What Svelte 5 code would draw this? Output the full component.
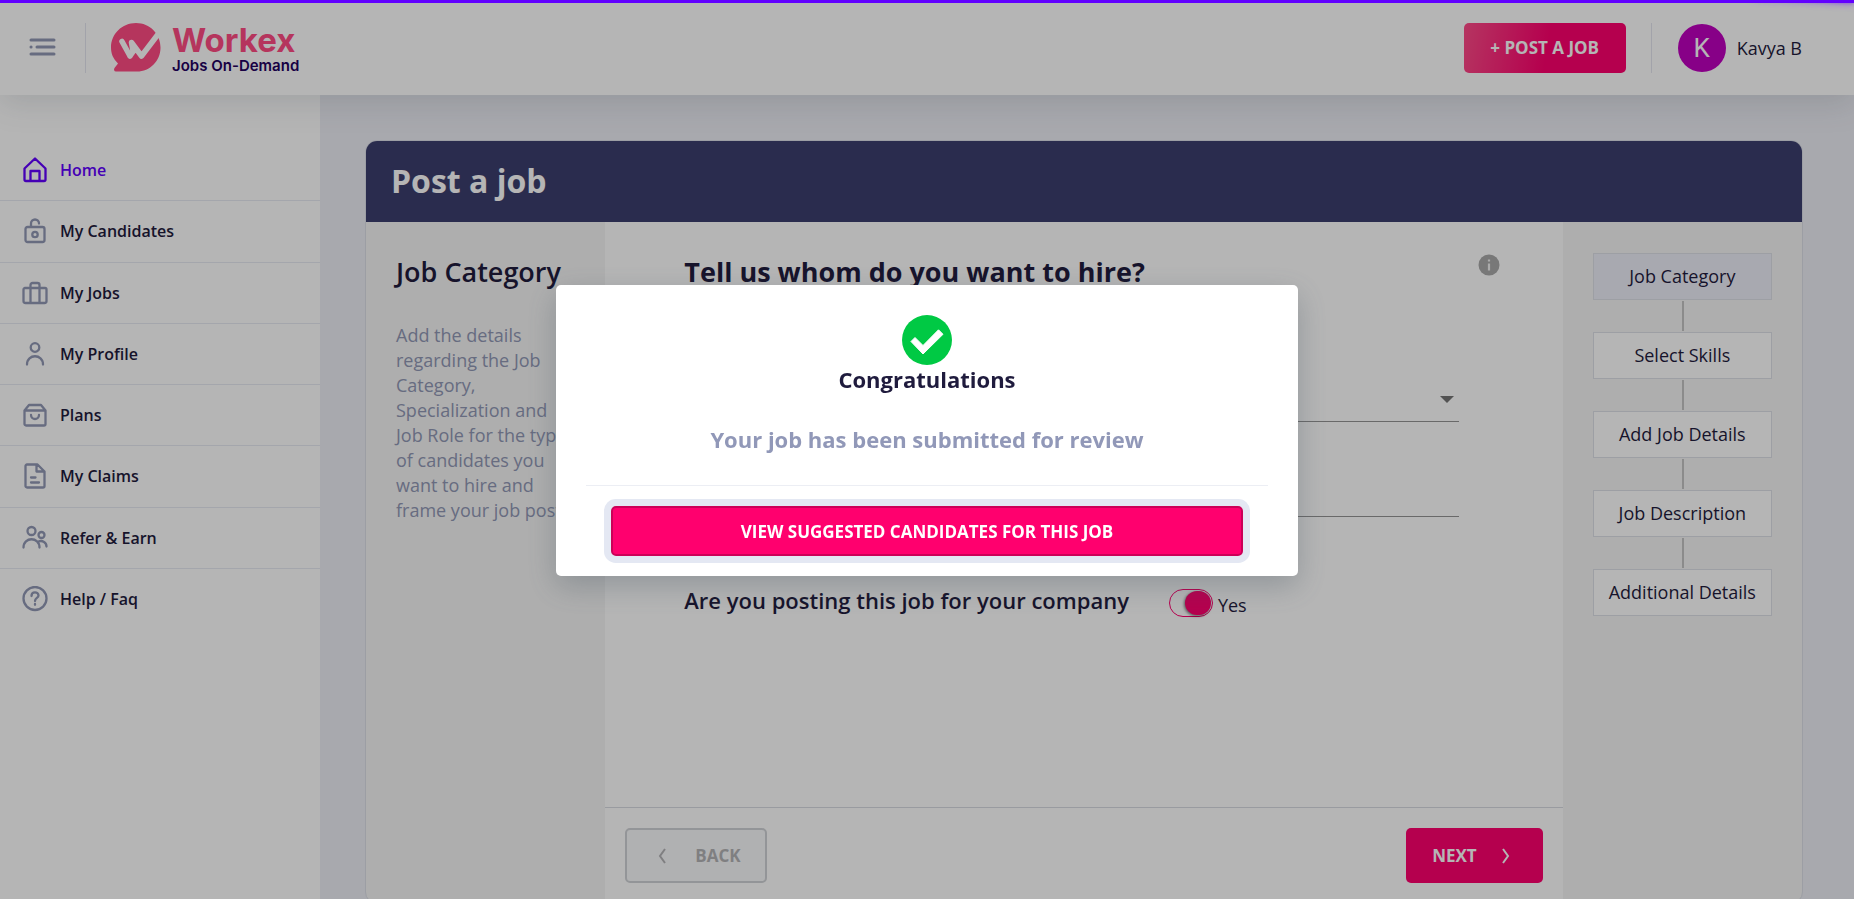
<script>
  let companyJob = $state(true);
  const menu = [
    { label: 'Home', icon: 'home', active: true },
    { label: 'My Candidates', icon: 'lock' },
    { label: 'My Jobs', icon: 'case' },
    { label: 'My Profile', icon: 'user' },
    { label: 'Plans', icon: 'bag' },
    { label: 'My Claims', icon: 'file' },
    { label: 'Refer & Earn', icon: 'users' },
    { label: 'Help / Faq', icon: 'help' }
  ];
  const icons = {
    home: 'M12 1.500 1.500 11.500v11a1.500 1.500 0 0 0 1.500 1.500h18a1.500 1.500 0 0 0 1.500-1.500v-11zM7.500 24V14h9v10',
    lock: 'M4.500 9h15a2 2 0 0 1 2 2V22a2 2 0 0 1-2 2h-15a2 2 0 0 1-2-2V11a2 2 0 0 1 2-2zM8 8.500V5.500a4 4 0 0 1 8 0M9.300 16.500a2.700 2.700 0 1 0 5.400 0a2.700 2.700 0 1 0-5.400 0',
    case: 'M2 8h20A1.500 1.500 0 0 1 23.500 9.500V21a2 2 0 0 1-2 2h-19a2 2 0 0 1-2-2V9.500a1.500 1.500 0 0 1 1.500-1.500zM7.500 23V5a2 2 0 0 1 2-2h5a2 2 0 0 1 2 2v18',
    user: 'M7.700 6.500a4.300 4.300 0 1 0 8.600 0a4.300 4.300 0 1 0-8.600 0M4 23.500c0-11 16-11 16 0',
    bag: 'M1.500 8.500 6 3h12l4.500 5.500V22a1.500 1.500 0 0 1-1.500 1.500H3A1.500 1.500 0 0 1 1.500 22zM2 8.500h20M8 13c0 5.300 8 5.300 8 0',
    file: 'M4 1.500h10.500l7 7V23a1.500 1.500 0 0 1-1.500 1.500H4A1.500 1.500 0 0 1 2.500 23V3A1.500 1.500 0 0 1 4 1.500zM13.500 2v6.500h7.500M8 14.500h4.500M8 19.500h8',
    users: 'M4.500 6a4 4 0 1 0 8 0a4 4 0 1 0-8 0M.5 22.500c0-11 16-11 16 0M15.500 10a3 3 0 1 0 6 0a3 3 0 1 0-6 0M15.500 16.500c4-1.500 8 1 8 5',
    help: 'M.5 12.500a11.500 11.500 0 1 0 23 0a11.500 11.500 0 1 0-23 0M8.500 10c0-5 7-4.500 7-.5 0 2.500-3.500 2.500-3.500 5.500M12 18v.8'
  };
  const steps = ['Job Category', 'Select Skills', 'Add Job Details', 'Job Description', 'Additional Details'];
</script>

<div class="progress"></div>

<header class="topbar">
  <button class="burger" aria-label="Toggle menu">
    <svg width="28" height="20" viewBox="0 0 28 20" fill="none" stroke="#9198b5" stroke-width="3" stroke-linecap="round">
      <path d="M3 2h23M9 9h17M3 9h.1M3 16h23" />
    </svg>
  </button>
  <a class="brand" href="#home">
    <svg width="50" height="50" viewBox="0 0 50 50">
      <path fill="#ff4b84" d="M25 0C11 0 0 11 0 24.500c0 6 2 11 7 16L3.500 45c-1 1.500-.5 3.500 1.500 3.500h21C39 48.500 49.500 38 49.500 24.500 49.500 11 39 0 25 0z" />
      <path fill="none" stroke="#fff" stroke-width="5.500" stroke-linecap="round" stroke-linejoin="round" d="M11 18.500l8 14.500 3-5-1.500-8.500 10 13.500L48 10M19 33l5-7" />
    </svg>
    <span class="words"><span class="name">Workex</span><span class="tag">Jobs On-Demand</span></span>
  </a>
  <button class="post">+ POST A JOB</button>
  <a class="account" href="#account"><span class="avatar">K</span>Kavya B</a>
</header>

<div class="shell">
  <nav class="side">
    <ul>
      {#each menu as item}
        <li>
          <a href="#{item.icon}" class:active={item.active}>
            <svg width="26" height="26" viewBox="-1 0 26 26" fill="none" stroke="currentColor" stroke-width="2.300" stroke-linecap="round" stroke-linejoin="round"><path d={icons[item.icon]} /></svg>
            <span>{item.label}</span>
          </a>
        </li>
      {/each}
    </ul>
  </nav>

  <main>
    <section class="card">
      <h1>Post a job</h1>
      <div class="columns">
        <aside class="about">
          <h2>Job Category</h2>
          <p>Add the details regarding the Job Category, Specialization and Job Role for the type of candidates you want to hire and frame your job post</p>
        </aside>
        <form onsubmit={(e) => e.preventDefault()}>
          <div class="fields">
            <div class="question">
              <h3>Tell us whom do you want to hire?</h3>
              <svg width="22" height="22" viewBox="0 0 22 22"><circle cx="11" cy="11" r="10.500" fill="#a9a9a9" /><path d="M11 5.500v2M11 9.500v7" stroke="#f2f2f2" stroke-width="2.200" /></svg>
            </div>
            <div class="inputs">
              <div class="field pick">
                <input aria-label="Job category" />
                <svg width="14" height="7" viewBox="0 0 14 7"><path d="M0 0h14L7 7z" fill="#757575" /></svg>
              </div>
              <div class="field"><input aria-label="Job role" /></div>
            </div>
            <div class="company">
              <label for="company">Are you posting this job for your company</label>
              <input id="company" type="checkbox" bind:checked={companyJob} />
              <span>{companyJob ? 'Yes' : 'No'}</span>
            </div>
          </div>
          <footer>
            <button type="button" class="back" disabled>
              <svg width="8" height="16" viewBox="0 0 8 16" fill="none" stroke="currentColor" stroke-width="2"><path d="M7 1 2 8l5 7" /></svg>BACK
            </button>
            <button class="next">NEXT<svg width="8" height="16" viewBox="0 0 8 16" fill="none" stroke="currentColor" stroke-width="2"><path d="M1 1l5 7-5 7" /></svg></button>
          </footer>
        </form>
        <ol class="steps">
          {#each steps as step, i}
            <li class:current={i === 0}>{step}</li>
          {/each}
        </ol>
      </div>
    </section>
  </main>
</div>

<div class="overlay">
  <div class="modal" role="dialog" aria-modal="true" aria-labelledby="done">
    <svg width="50" height="50" viewBox="0 0 50 50"><circle cx="25" cy="25" r="25" fill="#00c944" /><path d="M9 26.500l4-4 8 8L36.500 14.800l4.500 4.500L21 39z" fill="#fff" stroke="#fff" stroke-width="1" stroke-linejoin="round" /></svg>
    <h2 id="done">Congratulations</h2>
    <p>Your job has been submitted for review</p>
    <div class="actions"><button>VIEW SUGGESTED CANDIDATES FOR THIS JOB</button></div>
  </div>
</div>

<style>
  :global(body) {
    overflow: hidden;
    background: #edeef5;
    color: #1f1b3d;
    font-family: 'Open Sans', sans-serif;
    font-size: 18px;
  }
  :global(*) { box-sizing: border-box; }
  h1, h2, h3, p, ul, ol { margin: 0; padding: 0; }
  ul, ol { list-style: none; }
  a { color: inherit; text-decoration: none; }
  button, input { font: inherit; }
  button { border: 0; cursor: pointer; }
  svg { flex: none; display: block; }

  .progress {
    position: fixed;
    inset: 0 0 auto;
    z-index: 30;
    height: 3px;
    background: #6200ff;
  }
  .progress::after {
    content: '';
    position: absolute;
    right: 0;
    width: 100px;
    height: 100%;
    box-shadow: 0 0 10px #6200ff, 0 0 5px #6200ff;
    transform: rotate(3deg) translate(0, -4px);
  }
  .topbar {
    position: relative;
    z-index: 5;
    display: flex;
    align-items: center;
    height: 95px;
    padding: 0 52px 0 28px;
    background: #fff;
    box-shadow: 0 8px 30px rgba(60, 75, 90, 0.15);
  }
  .burger { padding: 0; background: none; }
  .brand {
    display: flex;
    gap: 11px;
    height: 50px;
    margin: 0 auto 0 29px;
    padding-left: 25px;
    border-left: 1px solid #e4e6f0;
  }
  .words { display: flex; flex-direction: column; }
  .name {
    color: #ff4b84;
    font: 700 33px/35px Inter, sans-serif;
  }
  .tag {
    color: #24005f;
    font: 600 15px/16px Inter, sans-serif;
  }
  .post {
    width: 162px;
    height: 50px;
    border-radius: 5px;
    background: linear-gradient(100deg, #ff4b89, #ff006e 52%);
    color: #fff;
    font-size: 17px;
    font-weight: 700;
  }
  .account {
    display: flex;
    align-items: center;
    gap: 11px;
    height: 50px;
    margin-left: 25px;
    padding-left: 26px;
    border-left: 1px solid #e4e6f0;
  }
  .avatar {
    display: grid;
    place-items: center;
    width: 48px;
    height: 48px;
    border-radius: 50%;
    background: #bf00bf;
    color: #fff;
    font: 26px Roboto, sans-serif;
  }

  .shell { display: flex; min-height: calc(100vh - 95px); }
  .side {
    flex: none;
    width: 320px;
    padding-top: 44px;
    background: #fff;
  }
  .side ul { display: grid; grid-auto-rows: 1fr; height: 490px; }
  .side li { display: grid; }
  .side li + li { border-top: 1px solid #e8eaf3; }
  .side a {
    display: flex;
    align-items: center;
    gap: 12px;
    padding-left: 22px;
    font-size: 16px;
    font-weight: 600;
  }
  .side svg { color: #9198b5; }
  .side .active, .side .active svg { color: #6200ff; }

  main { flex: 1; min-width: 0; padding: 45px 51px 45px 45px; }
  .card {
    overflow: hidden;
    border: 1px solid #dcdfe8;
    border-radius: 12px;
    background: #f5f5f5;
  }
  h1 {
    padding: 15px 25px 17px;
    background: #3c3f6f;
    color: #fff;
    font-size: 32px;
    font-weight: 700;
    line-height: 49px;
  }
  .columns { display: grid; grid-template-columns: 1fr 4fr 1fr; }
  .about { padding: 30px; }
  .about h2 {
    font-size: 27px;
    font-weight: 600;
    line-height: 40px;
    white-space: nowrap;
  }
  .about p {
    margin-top: 31px;
    color: #9198b5;
    line-height: 25px;
  }
  form { display: flex; flex-direction: column; background: #fff; }
  .fields { flex: 1; padding: 30px 63px 187px 79px; }
  .question { display: flex; justify-content: space-between; }
  h3 { font-size: 27px; font-weight: 700; line-height: 40px; }
  .question svg { margin-top: 2px; }
  .inputs { padding-right: 41px; }
  .field { display: flex; align-items: center; border-bottom: 1px solid #949494; }
  .field input {
    flex: 1;
    height: 44px;
    border: 0;
    outline: 0;
    background: none;
  }
  .field { margin-top: 50px; }
  .pick { margin-top: 85px; padding-right: 5px; }
  .company { display: flex; align-items: center; margin-top: 64px; }
  .company label { font-size: 22px; font-weight: 600; line-height: 39px; }
  .company input {
    appearance: none;
    display: flex;
    justify-content: flex-end;
    width: 44px;
    height: 28px;
    margin: 4px 5px 0 40px;
    padding: 1px;
    border: 1px solid #ff006e;
    border-radius: 14px;
  }
  .company input:not(:checked) { justify-content: flex-start; }
  .company input::before {
    content: '';
    width: 26px;
    height: 24px;
    border-radius: 13px;
    background: #ff006e;
    box-shadow: -1px 1px 3px rgba(0, 0, 0, 0.5);
  }
  .company span { margin-top: 8px; }
  footer {
    display: flex;
    justify-content: space-between;
    padding: 20px;
    border-top: 1px solid #d8dbe2;
  }
  footer button {
    display: flex;
    align-items: center;
    height: 55px;
    border-radius: 5px;
    font-size: 17px;
    font-weight: 700;
  }
  .back {
    gap: 29px;
    padding: 0 24px 0 31px;
    border: 2px solid #d0d2d6;
    background: #f8f9fb;
    color: #b4b4b6;
  }
  .next { gap: 25px; padding: 0 33px 0 26px; background: #ff006e; color: #fff; }

  .steps { padding: 31px 30px 0; }
  .steps li {
    position: relative;
    height: 47px;
    margin-bottom: 32px;
    border: 1px solid #dde1e8;
    background: #fff;
    line-height: 45px;
    text-align: center;
    white-space: nowrap;
  }
  .steps .current { background: #edeef8; }
  .steps li + li::before {
    content: '';
    position: absolute;
    bottom: calc(100% + 2px);
    left: 50%;
    width: 2px;
    height: 30px;
    background: #c4c4c4;
  }

  .overlay {
    position: fixed;
    inset: 0;
    z-index: 20;
    display: grid;
    place-items: center;
    padding-bottom: 38px;
    background: rgba(0, 0, 0, 0.29);
  }
  .modal {
    display: flex;
    flex-direction: column;
    align-items: center;
    width: 40%;
    padding: 30px 30px 20px;
    border-radius: 5px;
    background: #fff;
    box-shadow: 0 10px 30px rgba(60, 75, 90, 0.3);
    text-align: center;
  }
  .modal h2 { font-size: 22px; font-weight: 700; line-height: 28px; }
  .modal p {
    margin: 31px 0;
    color: #9198b8;
    font-size: 22px;
    font-weight: 700;
    line-height: 30px;
  }
  .actions { width: 100%; padding: 20px 25px 0; border-top: 1px solid #eceef4; }
  .actions button {
    width: 100%;
    height: 50px;
    border: 2px solid #cc0058;
    border-radius: 5px;
    background: #ff006e;
    box-shadow: 0 0 0 7px #e4e8f3;
    color: #fff;
    font-size: 17px;
    font-weight: 700;
  }
</style>
